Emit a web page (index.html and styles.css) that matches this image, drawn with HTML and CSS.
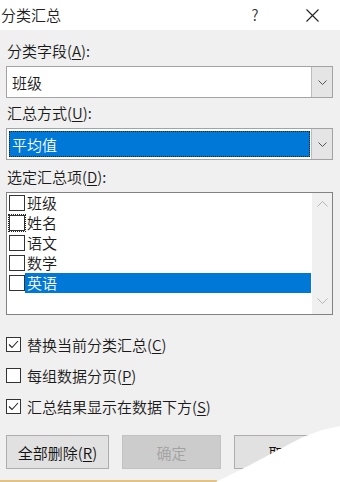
FILE: index.html
```html
<!DOCTYPE html>
<html lang="zh-CN">
<head>
  <meta charset="UTF-8" />
  <meta name="viewport" content="width=device-width, initial-scale=1.0"/>
  <title>分类汇总</title>
  <link rel="stylesheet" href="styles.css">
</head>
<body>

  <div class="dialog">
    <header class="titlebar">
      <span class="title">分类汇总</span>
      <span class="help">?</span>
      <span class="close">
        <svg width="13" height="13" viewBox="0 0 13 13"><path d="M0.5 0.5L12.5 12.5M12.5 0.5L0.5 12.5" stroke="#222" stroke-width="1.1" fill="none"/></svg>
      </span>
    </header>

    <main class="content">
      <label class="field-label first">分类字段(<u>A</u>):</label>
      <div class="combo">
        <div class="combo-value"><span class="combo-text">班级</span></div>
        <div class="combo-arrow">
          <svg width="9" height="5" viewBox="0 0 9 5"><path d="M0.5 0.5L4.5 4.5L8.5 0.5" stroke="#555" fill="none"/></svg>
        </div>
      </div>

      <label class="field-label">汇总方式(<u>U</u>):</label>
      <div class="combo">
        <div class="combo-value"><span class="combo-text selected">平均值</span></div>
        <div class="combo-arrow">
          <svg width="9" height="5" viewBox="0 0 9 5"><path d="M0.5 0.5L4.5 4.5L8.5 0.5" stroke="#555" fill="none"/></svg>
        </div>
      </div>

      <label class="field-label third">选定汇总项(<u>D</u>):</label>
      <div class="listbox">
        <ul class="items">
          <li class="item"><span class="box"></span><span class="item-text">班级</span></li>
          <li class="item"><span class="box focused"></span><span class="item-text">姓名</span></li>
          <li class="item"><span class="box"></span><span class="item-text">语文</span></li>
          <li class="item"><span class="box"></span><span class="item-text">数学</span></li>
          <li class="item active"><span class="box"></span><span class="item-text">英语</span></li>
        </ul>
        <div class="scrollbar">
          <svg width="11" height="6" viewBox="0 0 11 6"><path d="M0.5 5.5L5.5 0.5L10.5 5.5" stroke="#b4b4b4" fill="none"/></svg>
          <svg width="11" height="6" viewBox="0 0 11 6"><path d="M0.5 0.5L5.5 5.5L10.5 0.5" stroke="#b4b4b4" fill="none"/></svg>
        </div>
      </div>

      <div class="options">
        <div class="option">
          <span class="check">
            <svg width="13" height="13" viewBox="0 0 13 13"><path d="M2 6.5L5 9.5L11 3" stroke="#222" stroke-width="1.1" fill="none"/></svg>
          </span>
          <span>替换当前分类汇总(<u>C</u>)</span>
        </div>
        <div class="option">
          <span class="check"></span>
          <span>每组数据分页(<u>P</u>)</span>
        </div>
        <div class="option">
          <span class="check">
            <svg width="13" height="13" viewBox="0 0 13 13"><path d="M2 6.5L5 9.5L11 3" stroke="#222" stroke-width="1.1" fill="none"/></svg>
          </span>
          <span>汇总结果显示在数据下方(<u>S</u>)</span>
        </div>
      </div>

      <div class="buttons">
        <button class="btn wide">全部删除(<u>R</u>)</button>
        <button class="btn disabled">确定</button>
        <button class="btn">取消</button>
      </div>
    </main>

    <div class="edge"></div>
    <div class="curl"></div>
  </div>

</body>
</html>
```

FILE: styles.css
```css
* { box-sizing: border-box; margin: 0; padding: 0; }

body {
  font-family: "Noto Sans CJK SC", "Noto Sans", sans-serif;
  font-size: 15px;
  font-weight: 350;
  color: #1a1a1a;
  background: #f0f0f0;
}

.dialog {
  width: 340px;
  height: 482px;
  background-color: #f0f0f0;
  position: relative;
  overflow: hidden;
  display: flex;
  flex-direction: column;
}

/* 标题栏 */
.titlebar {
  height: 30px;
  background-color: #fff;
  display: flex;
  align-items: center;
  padding: 0 21px 0 1px;
}

.title {
  flex: 1;
  line-height: 30px;
  color: #222;
}

.help {
  width: 20px;
  text-align: center;
  margin-right: 41px;
  font-size: 15px;
  color: #333;
  line-height: 30px;
}

.close {
  display: flex;
  width: 13px;
  height: 13px;
}

.content {
  flex: 1;
  padding: 0 7px 0 6px;
}

.field-label {
  display: block;
  line-height: 22px;
  margin-top: 4px;
  padding-left: 1px;
}

.field-label.first { margin-top: 10px; }
.field-label.third { margin-top: 6px; }

u { text-decoration-thickness: 1px; text-underline-offset: 2px; }

/* 下拉框 */
.combo {
  height: 32px;
  margin-top: 4px;
  border: 1px solid #a3a3a3;
  background-color: #fff;
  display: flex;
}

.combo-value {
  flex: 1;
  padding: 2px 1px 2px 2px;
  display: flex;
}

.combo-text {
  flex: 1;
  line-height: 26px;
  padding-left: 2px;
  border: 1px solid transparent;
}

.combo-text.selected {
  background-color: #0078d7;
  color: #fff;
  border: 1px dotted #222;
}

.combo-arrow {
  width: 21px;
  background-color: #e5e5e5;
  border-left: 1px solid #bcbcbc;
  display: flex;
  align-items: center;
  justify-content: center;
}

/* 列表框 */
.listbox {
  height: 123px;
  margin-top: 4px;
  border: 1px solid #828282;
  background-color: #fff;
  display: flex;
}

.items {
  flex: 1;
  list-style: none;
}

.item {
  height: 20px;
  display: flex;
  align-items: center;
  padding-left: 2px;
}

.box {
  width: 16px;
  height: 16px;
  border: 1px solid #333;
  background-color: #fff;
}

.box.focused {
  outline: 1px dotted #222;
  outline-offset: 0;
}

.item-text {
  flex: 1;
  height: 20px;
  line-height: 20px;
  padding-left: 2px;
  margin-right: 1px;
}

.item.active .item-text {
  background-color: #0078d7;
  color: #fff;
}

.scrollbar {
  width: 20px;
  background-color: #f0f0f0;
  display: flex;
  flex-direction: column;
  align-items: center;
  justify-content: space-between;
  padding: 8px 0 10px;
}

/* 复选项 */
.options {
  margin-top: 14px;
}

.option {
  height: 31px;
  display: flex;
  align-items: center;
}

.check {
  width: 15px;
  height: 15px;
  border: 1px solid #333;
  background-color: #fff;
  margin-right: 6px;
  display: flex;
}

/* 按钮 */
.buttons {
  margin-top: 13px;
  display: flex;
  gap: 13px;
}

.btn {
  width: 99px;
  height: 34px;
  font-family: inherit;
  font-size: 15px;
  font-weight: inherit;
  color: #111;
  background-color: #e1e1e1;
  border: 1px solid #adadad;
}

.btn.wide { width: 103px; }

.btn.disabled {
  background-color: #cccccc;
  border-color: #c2c2c2;
  color: #a2a2a2;
}

.edge {
  width: 217px;
  height: 2px;
  background-color: #e6c281;
}

/* 右下角卷页 */
.curl {
  position: absolute;
  inset: 0;
  background-color: #fff;
  clip-path: polygon(216px 482px, 250px 465px, 280px 449px, 303px 437px, 322px 430px, 340px 426px, 340px 482px);
}
```
